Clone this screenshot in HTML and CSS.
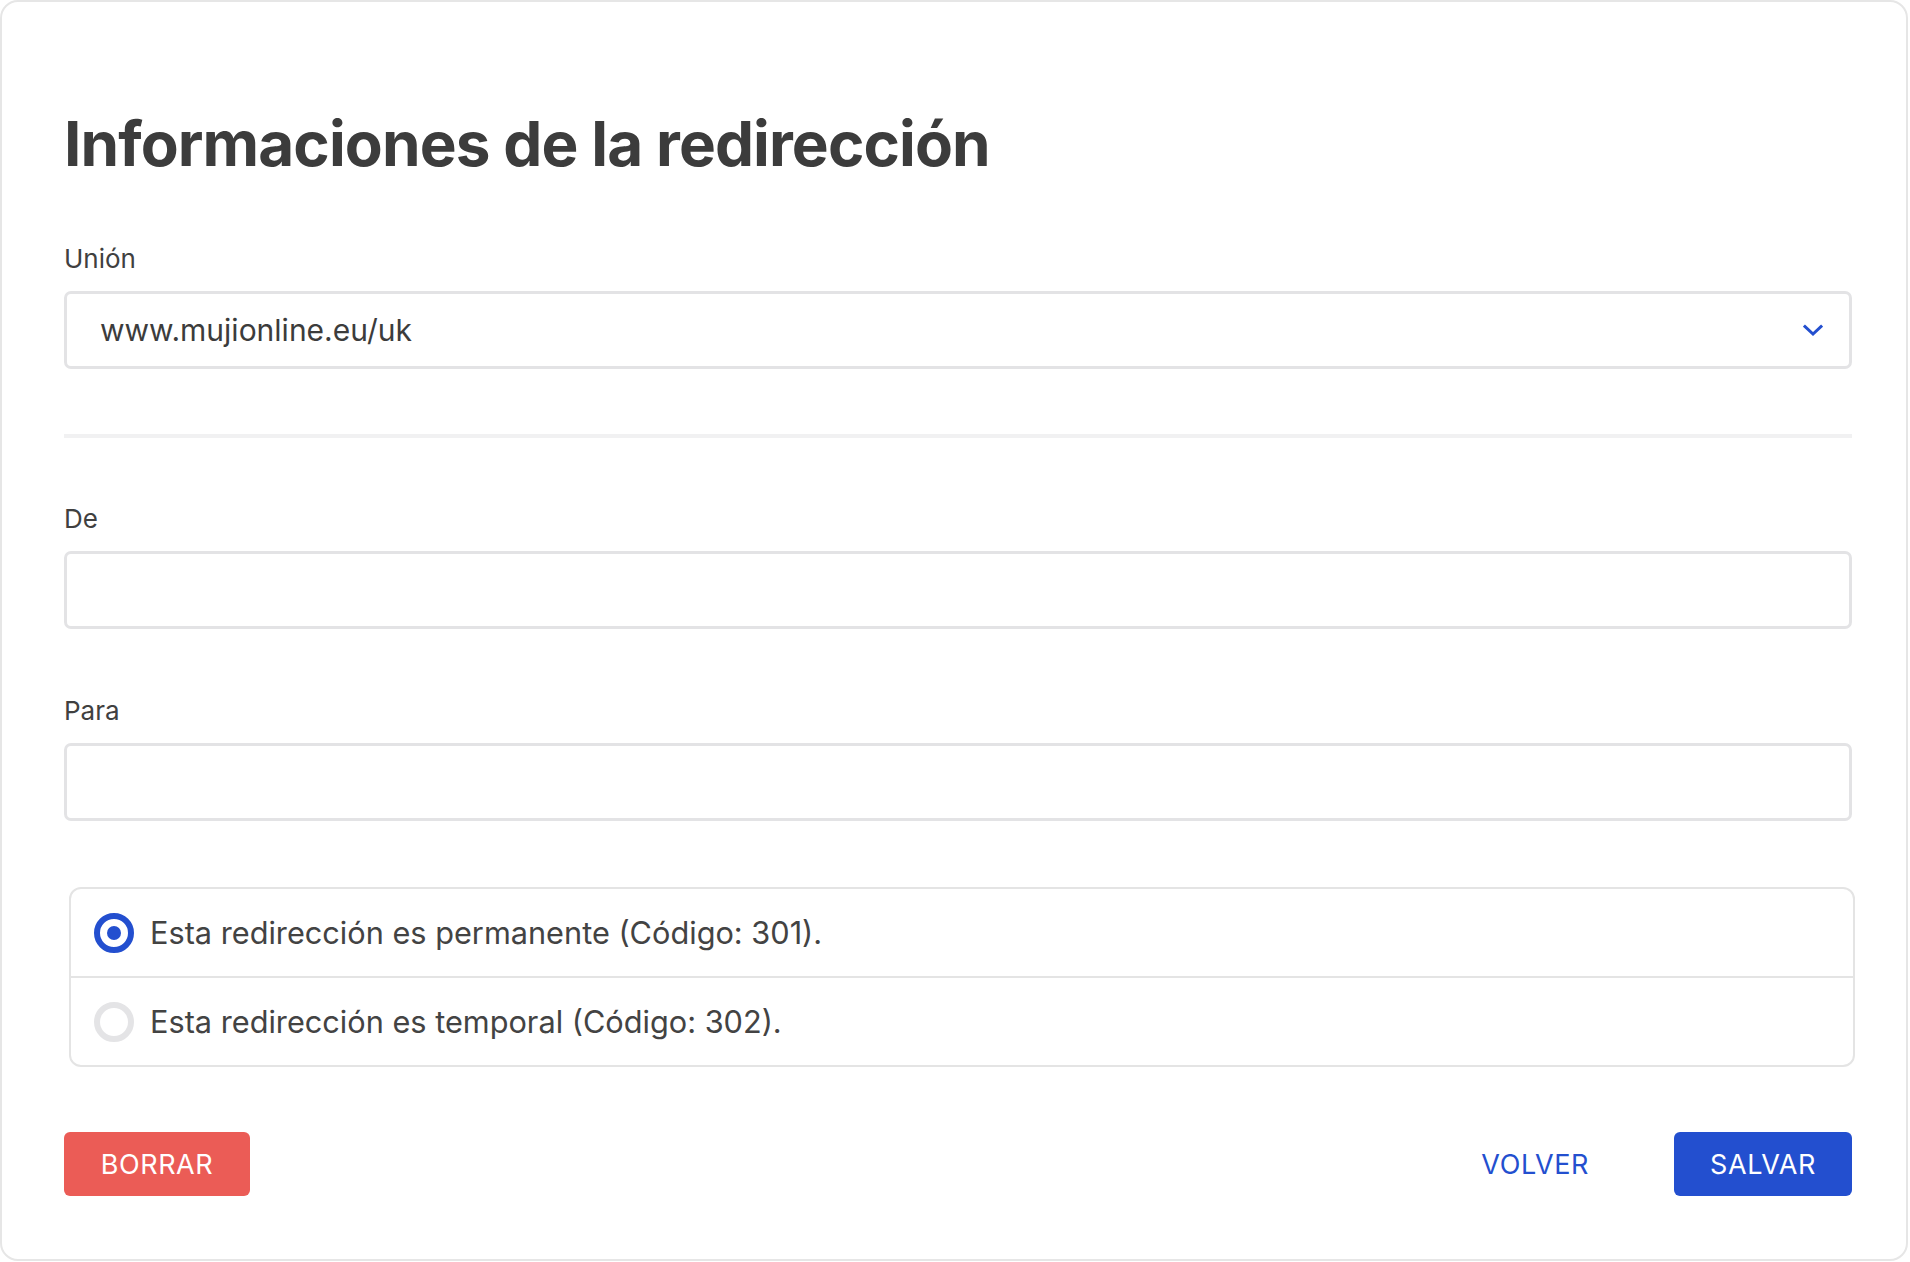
FILE: index.html
```html
<!DOCTYPE html>
<html lang="es">
<head>
<meta charset="utf-8">
<title>Informaciones de la redirección</title>
<link rel="stylesheet" href="styles.css">
</head>
<body>
<main class="card">
  <h1 class="title">Informaciones de la redirección</h1>

  <div class="field">
    <label class="label">Unión</label>
    <div class="select">
      <span class="select-value">www.mujionline.eu/uk</span>
      <svg class="chevron" width="20" height="13" viewBox="0 0 20 13" aria-hidden="true">
        <path d="M2 2.5 L10 10 L18 2.5" fill="none" stroke="#234fcf" stroke-width="3" stroke-linecap="square" stroke-linejoin="miter"/>
      </svg>
    </div>
  </div>

  <hr class="divider">

  <div class="field">
    <label class="label">De</label>
    <input class="input" type="text">
  </div>

  <div class="field field-gap">
    <label class="label">Para</label>
    <input class="input" type="text">
  </div>

  <div class="radios">
    <div class="radio-row">
      <span class="radio checked"></span>
      <span class="radio-text">Esta redirección es permanente (Código: 301).</span>
    </div>
    <div class="radio-row">
      <span class="radio"></span>
      <span class="radio-text">Esta redirección es temporal (Código: 302).</span>
    </div>
  </div>

  <div class="actions">
    <button class="btn btn-danger">BORRAR</button>
    <div class="actions-right">
      <button class="btn btn-link">VOLVER</button>
      <button class="btn btn-primary">SALVAR</button>
    </div>
  </div>
</main>
</body>
</html>
```

FILE: styles.css
```css
html, body {
  margin: 0;
  padding: 0;
  background: #ffffff;
}

body {
  font-family: Inter, "Noto Sans", "Liberation Sans", sans-serif;
  color: #404040;
}

.card {
  box-sizing: border-box;
  width: 1908px;
  height: 1261px;
  border: 2px solid #e6e6e6;
  border-radius: 18px;
  padding: 105px 54px 0 62px;
  display: flex;
  flex-direction: column;
}

.title {
  margin: 0;
  font-size: 62px;
  line-height: 74px;
  font-weight: 700;
  color: #3c3c3c;
  letter-spacing: -0.9px;
}

.field {
  display: flex;
  flex-direction: column;
}

.title + .field {
  margin-top: 63px;
}

.label {
  font-size: 26px;
  line-height: 30px;
  color: #404040;
  margin-bottom: 17px;
}

.select {
  box-sizing: border-box;
  height: 78px;
  border: 3px solid #e3e3e5;
  border-radius: 7px;
  display: flex;
  align-items: center;
  justify-content: space-between;
  padding: 0 26px 0 33px;
}

.select-value {
  font-size: 30px;
  color: #3c3c3c;
}

.chevron {
  display: block;
}

.divider {
  margin: 65px 0 0;
  border: 0;
  height: 4px;
  background: #f1f1f2;
}

.divider + .field {
  margin-top: 66px;
}

.input {
  box-sizing: border-box;
  height: 78px;
  border: 3px solid #e3e3e5;
  border-radius: 7px;
  background: #fff;
  font: inherit;
  padding: 0 30px;
  outline: none;
}

.field-gap {
  margin-top: 67px;
}

.radios {
  margin: 66px -3px 0 5px;
  border: 2px solid #e4e4e4;
  border-radius: 12px;
  display: flex;
  flex-direction: column;
}

.radio-row {
  height: 87px;
  display: flex;
  align-items: center;
  padding-left: 23px;
  gap: 16px;
}

.radio-row + .radio-row {
  border-top: 2px solid #e4e4e4;
}

.radio {
  box-sizing: border-box;
  width: 40px;
  height: 40px;
  border-radius: 50%;
  border: 6px solid #e4e4e6;
  background: #fff;
  flex: none;
  display: flex;
  align-items: center;
  justify-content: center;
}

.radio.checked {
  border-color: #234fcf;
}

.radio.checked::after {
  content: "";
  width: 14px;
  height: 14px;
  border-radius: 50%;
  background: #234fcf;
}

.radio-text {
  font-size: 30.7px;
  color: #434343;
}

.actions {
  margin-top: 65px;
  display: flex;
  justify-content: space-between;
  align-items: center;
}

.actions-right {
  display: flex;
  align-items: center;
  gap: 55px;
}

.btn {
  box-sizing: border-box;
  height: 64px;
  border: 0;
  border-radius: 6px;
  padding: 0 30px;
  font-family: Inter, "Noto Sans", "Liberation Sans", sans-serif;
  font-size: 27px;
  font-weight: 400;
  letter-spacing: 0.6px;
  cursor: pointer;
}

.btn-danger {
  background: #eb5c56;
  color: #ffffff;
  width: 186px;
}

.btn-primary {
  background: #234fcf;
  color: #ffffff;
  width: 178px;
}

.btn-link {
  background: transparent;
  color: #234fcf;
}
```
